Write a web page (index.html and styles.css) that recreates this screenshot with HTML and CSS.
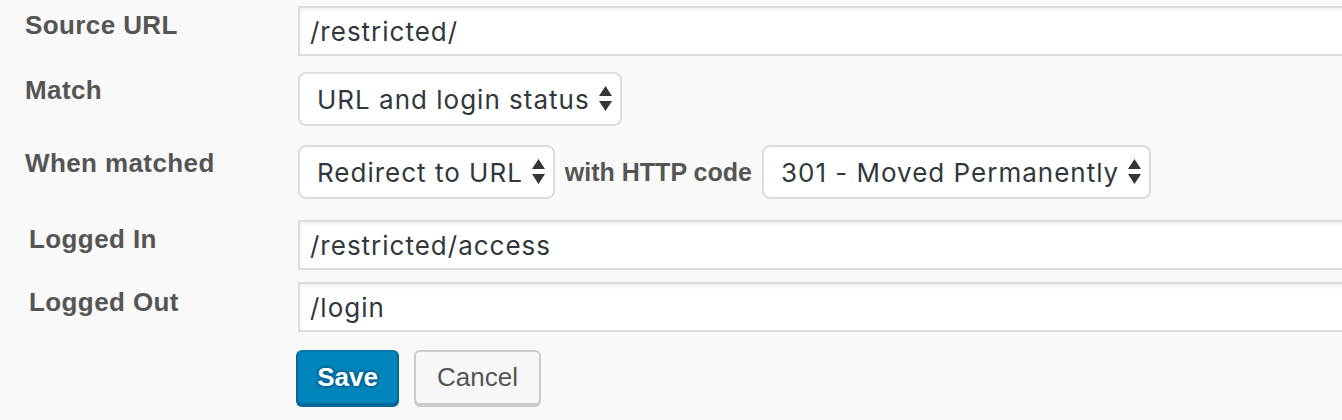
FILE: index.html
```html
<!DOCTYPE html>
<html>
<head>
<meta charset="utf-8">
<link rel="stylesheet" href="styles.css">
</head>
<body>
<div class="form">
  <div class="row row-source">
    <div class="label">Source URL</div>
    <div class="field"><input class="text" type="text" value="/restricted/"></div>
  </div>
  <div class="row row-match">
    <div class="label">Match</div>
    <div class="field">
      <div class="select"><span>URL and login status</span>
        <svg class="arrows" width="13" height="26" viewBox="0 0 13 26"><path d="M6.5 0 L13 10 L0 10 Z M0 15 L13 15 L6.5 25 Z" fill="#32373c"/></svg>
      </div>
    </div>
  </div>
  <div class="row row-when">
    <div class="label">When matched</div>
    <div class="field inline">
      <div class="select"><span>Redirect to URL</span>
        <svg class="arrows" width="13" height="26" viewBox="0 0 13 26"><path d="M6.5 0 L13 10 L0 10 Z M0 15 L13 15 L6.5 25 Z" fill="#32373c"/></svg>
      </div>
      <span class="inline-label">with HTTP code</span>
      <div class="select"><span>301 - Moved Permanently</span>
        <svg class="arrows" width="13" height="26" viewBox="0 0 13 26"><path d="M6.5 0 L13 10 L0 10 Z M0 15 L13 15 L6.5 25 Z" fill="#32373c"/></svg>
      </div>
    </div>
  </div>
  <div class="row row-in">
    <div class="label sub">Logged In</div>
    <div class="field"><input class="text" type="text" value="/restricted/access"></div>
  </div>
  <div class="row row-out">
    <div class="label sub">Logged Out</div>
    <div class="field"><input class="text" type="text" value="/login"></div>
  </div>
  <div class="row row-buttons">
    <div class="label"></div>
    <div class="field buttons">
      <button class="btn btn-primary">Save</button>
      <button class="btn btn-secondary">Cancel</button>
    </div>
  </div>
</div>
</body>
</html>
```

FILE: styles.css
```css
html, body {
  margin: 0;
  padding: 0;
  background: #f9f9f9;
  overflow: hidden;
}
body {
  width: 1342px;
  height: 420px;
  font-family: "Liberation Sans", Arial, sans-serif;
}
.form {
  padding-top: 6px;
}
.row {
  display: flex;
  align-items: flex-start;
}
.label {
  box-sizing: border-box;
  width: 298px;
  flex: none;
  padding-left: 25px;
  font-size: 26px;
  line-height: 30px;
  font-weight: bold;
  letter-spacing: 0.4px;
  color: #555;
}
.label.sub {
  padding-left: 29px;
}
.row-source .label { padding-top: 4px; }
.row-match { margin-top: 16px; }
.row-match .label { padding-top: 3px; }
.row-when { margin-top: 19px; }
.row-when .label { padding-top: 3px; }
.row-in { margin-top: 21px; }
.row-in .label { padding-top: 4px; }
.row-out { margin-top: 12px; }
.row-out .label { padding-top: 5px; }
.row-buttons { margin-top: 18px; }

.field {
  flex: none;
}
.field.inline {
  display: flex;
  align-items: center;
  gap: 10px;
}
.text {
  box-sizing: border-box;
  display: block;
  width: 1100px;
  height: 50px;
  margin: 0;
  padding: 0 10px;
  border: 2px solid #ddd;
  border-radius: 0;
  background: #fff;
  box-shadow: inset 0 2px 4px rgba(0, 0, 0, 0.07);
  font-family: Inter, "Liberation Sans", sans-serif;
  font-size: 26px;
  letter-spacing: 1px;
  color: #32373c;
  outline: none;
}
.select {
  box-sizing: border-box;
  display: inline-flex;
  align-items: center;
  gap: 9px;
  height: 54px;
  padding: 0 8px 0 17px;
  border: 2px solid #ddd;
  border-radius: 8px;
  background: #fff;
  font-family: Inter, "Liberation Sans", sans-serif;
  font-size: 26px;
  letter-spacing: 1px;
  color: #32373c;
  white-space: nowrap;
}
.arrows {
  display: block;
  flex: none;
}
.inline-label {
  font-size: 25px;
  font-weight: bold;
  color: #555;
  white-space: nowrap;
}
.buttons {
  display: flex;
  gap: 15px;
  margin-left: -2px;
}
.btn {
  box-sizing: border-box;
  height: 55px;
  margin: 0;
  border-radius: 6px;
  border: 2px solid;
  font-family: "Liberation Sans", Arial, sans-serif;
  font-size: 26px;
  cursor: pointer;
}
.btn-primary {
  width: 103px;
  background: #0085ba;
  border-color: #0073aa #006799 #006799;
  box-shadow: 0 2px 0 #006799;
  color: #fff;
  font-weight: bold;
  text-shadow: 0 -2px 2px #006799, 2px 0 2px #006799, 0 2px 2px #006799, -2px 0 2px #006799;
}
.btn-secondary {
  width: 127px;
  background: #f7f7f7;
  border-color: #ccc;
  box-shadow: 0 2px 0 #ccc;
  color: #555;
}
```
